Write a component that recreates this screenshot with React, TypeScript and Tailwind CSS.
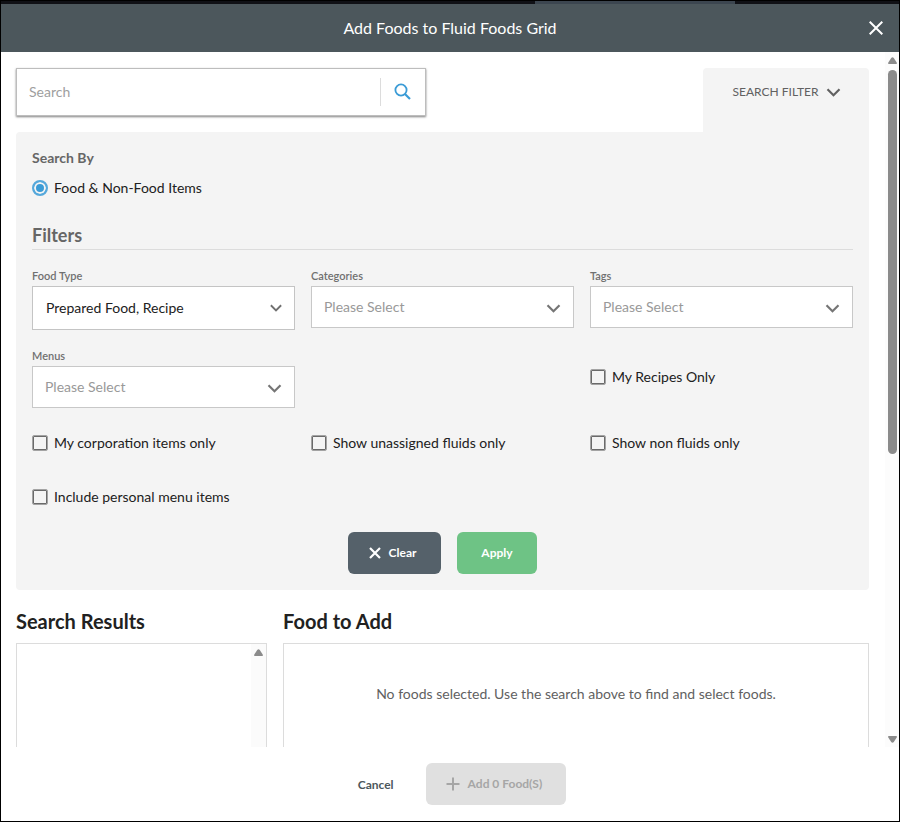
import React from "react";

function Chevron({ className }: { className: string }) {
  return (
    <svg viewBox="0 0 14 9" fill="none" className={className} aria-hidden="true">
      <path d="M1 1.3 7 7.2l6-5.9" stroke="currentColor" strokeWidth="2.2" />
    </svg>
  );
}

function Arrow({ down = false }: { down?: boolean }) {
  return (
    <svg viewBox="0 0 9 7" className="h-[7px] w-[9px] shrink-0 text-[#8b8b8b]" aria-hidden="true">
      <path
        d={down ? "M.8 0h7.400q1.200.3.500 1.500L5.800 6q-1.300 1.600-2.600 0L.3 1.500Q-.4.3.8 0Z" : "M.8 7h7.400q1.200-.3.500-1.500L5.800 1Q4.500-.6 3.200 1L.3 5.500Q-.4 6.700.8 7Z"}
        fill="currentColor"
      />
    </svg>
  );
}

function SelectField({ id, label, value, filled = false }: { id: string; label: string; value: string; filled?: boolean }) {
  return (
    <div className="flex flex-col">
      <label htmlFor={id} className="pb-1 text-[11px] leading-3 font-semibold text-[#707070]">
        {label}
      </label>
      <div className="grid items-center">
        <select
          id={id}
          className={
            filled
              ? "col-start-1 row-start-1 h-11 w-full appearance-none border border-[#c4c4c4] bg-white px-[13px] text-sm text-[#212121]"
              : "col-start-1 row-start-1 h-[42px] w-full appearance-none border border-[#c8c8c8] bg-white px-3 text-sm text-[#999]"
          }
        >
          <option>{value}</option>
        </select>
        <Chevron
          className={
            filled
              ? "pointer-events-none col-start-1 row-start-1 mr-[13px] h-2 w-3 justify-self-end text-[#707070]"
              : "pointer-events-none col-start-1 row-start-1 mt-0.5 mr-[13px] h-[9px] w-[15px] justify-self-end text-[#757575]"
          }
        />
      </div>
    </div>
  );
}

function CheckField({ label, className = "" }: { label: string; className?: string }) {
  return (
    <label className={`flex h-[22px] items-center gap-1.5 text-sm text-[#212121] ${className}`}>
      <input
        type="checkbox"
        className="size-4 shrink-0 appearance-none rounded-[2px] border border-[#a3a3a3] shadow-[inset_0_0_0_1px_#6a6a6a]"
      />
      {label}
    </label>
  );
}

export default function App() {
  return (
    <div className="flex h-screen flex-col border border-black bg-white font-[Lato,sans-serif] text-[#212121]">
      <div className="flex h-[3px] shrink-0 justify-center bg-[#101116]">
        <div className="ml-[370px] w-[200px] bg-[#3c4650]" />
      </div>
      <header className="grid h-12 shrink-0 grid-cols-[1fr_auto_1fr] items-center bg-[#4c575c] text-white">
        <h1 className="col-start-2 text-base font-normal">Add Foods to Fluid Foods Grid</h1>
        <button type="button" aria-label="Close" className="mr-4 justify-self-end">
          <svg viewBox="0 0 14 14" className="size-3.5" aria-hidden="true">
            <path d="M.7.7l12.600 12.600M13.300.7.7 13.300" stroke="currentColor" strokeWidth="2" />
          </svg>
        </button>
      </header>

      <div className="flex min-h-0 flex-1">
        <main className="flex min-w-0 flex-1 flex-col overflow-hidden pt-4 pr-4 pl-[15px]">
          <div className="flex h-16 shrink-0 items-start justify-between">
            <form className="flex h-12 w-[410px] items-center border border-[#bdbdbd] bg-white shadow-[0_1px_2px_rgba(0,0,0,0.5)]">
              <input
                type="text"
                aria-label="Search"
                placeholder="Search"
                className="h-full min-w-0 flex-1 px-3 pb-0.5 text-sm outline-none placeholder:text-[#9e9e9e]"
              />
              <button
                type="button"
                aria-label="Run search"
                className="flex h-7 w-[45px] items-center justify-center border-l border-[#dcdcdc] pr-0.5 pb-0.5 text-[#3a9bd6]"
              >
                <svg viewBox="0 0 17 17" fill="none" className="size-[17px]" aria-hidden="true">
                  <circle cx="7" cy="7" r="5.600" stroke="currentColor" strokeWidth="1.800" />
                  <path d="M11 11l5 5" stroke="currentColor" strokeWidth="2.200" />
                </svg>
              </button>
            </form>
            <button
              type="button"
              className="flex h-16 w-[166px] items-start justify-center gap-2 rounded-t bg-[#f4f4f4] pt-4 pl-0.5 text-xs leading-4 text-[#616161]"
            >
              SEARCH FILTER
              <Chevron className="mt-1 h-[9px] w-[15px]" />
            </button>
          </div>

          <section className="shrink-0 rounded-b rounded-tl bg-[#f4f4f4] p-4">
            <fieldset>
              <legend className="text-sm font-bold text-[#666]">Search By</legend>
              <label className="mt-2 flex h-6 items-center gap-1.5 text-sm">
                <input
                  type="radio"
                  name="searchBy"
                  defaultChecked
                  className="size-4 appearance-none rounded-full border-2 border-[#55a8db] bg-[#3a9bd6] shadow-[inset_0_0_0_2px_#f4f4f4]"
                />
                Food &amp; Non-Food Items
              </label>
            </fieldset>
            <h2 className="mt-[23px] border-b border-[#dcdcdc] pb-0.5 text-lg leading-6 font-bold text-[#666]">Filters</h2>

            <div className="mt-5 grid grid-cols-3 gap-x-4">
              <div className="h-20">
                <SelectField id="foodType" label="Food Type" value="Prepared Food, Recipe" filled />
              </div>
              <SelectField id="categories" label="Categories" value="Please Select" />
              <SelectField id="tags" label="Tags" value="Please Select" />
              <SelectField id="menus" label="Menus" value="Please Select" />
              <CheckField label="My Recipes Only" className="col-start-3 mt-4" />
            </div>
            <div className="mt-6 grid grid-cols-3 gap-x-4 gap-y-8">
              <CheckField label="My corporation items only" />
              <CheckField label="Show unassigned fluids only" />
              <CheckField label="Show non fluids only" />
              <CheckField label="Include personal menu items" />
            </div>

            <div className="mt-6 flex justify-center gap-4 text-xs font-bold text-white">
              <button type="button" className="flex h-[42px] w-[93px] items-center justify-center gap-2 rounded-md bg-[#55616a] pr-1">
                <svg viewBox="0 0 12 12" className="size-3" aria-hidden="true">
                  <path d="M1 1l10 10M11 1 1 11" stroke="currentColor" strokeWidth="2.200" />
                </svg>
                Clear
              </button>
              <button type="button" className="h-[42px] w-20 rounded-md bg-[#6ec385]">
                Apply
              </button>
            </div>
          </section>

          <div className="mt-[15px] grid min-h-0 flex-1 grid-cols-[3fr_7fr] grid-rows-[auto_1fr] gap-x-4 gap-y-1.5">
            <h2 className="text-xl leading-8 font-bold">Search Results</h2>
            <h2 className="text-xl leading-8 font-bold">Food to Add</h2>
            <div className="flex justify-end border border-b-0 border-[#dcdcdc]">
              <div className="flex w-[15px] justify-center bg-[#fbfbfb] pt-[5px]">
                <Arrow />
              </div>
            </div>
            <div className="border border-b-0 border-[#dcdcdc] pt-10 text-center text-sm text-[#616161]">
              No foods selected. Use the search above to find and select foods.
            </div>
          </div>
        </main>

        <div className="flex w-3.5 flex-col items-center bg-[#fcfcfc] pt-[5px] pb-1">
          <Arrow />
          <div className="mt-1.5 flex-1">
            <div className="h-[384px] w-[9px] rounded-full bg-[#8b8b8b]" />
          </div>
          <Arrow down />
        </div>
      </div>

      <footer className="flex shrink-0 justify-center gap-2 py-4 text-xs font-bold">
        <button type="button" className="px-6 pt-0.5 text-[#4c575c]">
          Cancel
        </button>
        <button
          type="button"
          disabled
          className="flex h-[42px] items-center gap-2 rounded-md bg-[#e0e0e0] pr-6 pl-5 text-[#a6a6a6]"
        >
          <svg viewBox="0 0 14 14" className="size-3.5" aria-hidden="true">
            <path d="M7 .5v13M.5 7h13" stroke="currentColor" strokeWidth="2" />
          </svg>
          Add 0 Food(S)
        </button>
      </footer>
    </div>
  );
}
